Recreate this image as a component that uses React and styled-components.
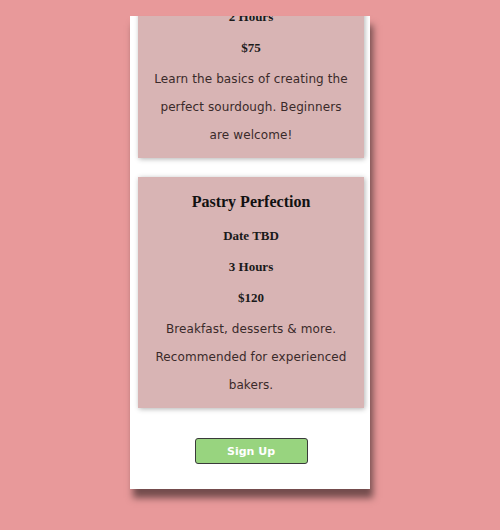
import { useLayoutEffect, useRef } from 'react';
import styled, { createGlobalStyle } from 'styled-components';

const GlobalStyle = createGlobalStyle`
  html, body {
    margin: 0;
    padding: 0;
    background: #e8999a;
    font-family: "DejaVu Sans", "Open Sans", sans-serif;
  }
`;

const Page = styled.div`
  width: 500px;
  height: 530px;
  padding-top: 16px;
  box-sizing: border-box;
  display: flex;
  justify-content: center;
  align-items: flex-start;
`;

const Panel = styled.div`
  width: 240px;
  height: 473px;
  background: #fff;
  box-shadow: 3px 9px 7px rgba(0, 0, 0, 0.5);
  overflow-y: auto;
  scrollbar-width: none;
  &::-webkit-scrollbar {
    display: none;
  }
`;

const Inner = styled.div`
  padding: 8px 6px 25px 8px;
  display: flex;
  flex-direction: column;
  align-items: center;
`;

const Heading = styled.h2`
  font-family: "Liberation Serif", serif;
  font-size: 22px;
  margin: 12px 0 20px;
  color: #222;
`;

const Card = styled.div`
  width: 226px;
  box-sizing: border-box;
  background: #d8b4b4;
  box-shadow: 1px 1px 5px rgba(0, 0, 0, 0.3);
  padding: 14px 13px 9px;
  margin-bottom: ${(p) => (p.$last ? '30px' : '19px')};
  text-align: center;
`;

const Title = styled.h3`
  font-family: "Liberation Serif", serif;
  font-size: 16px;
  line-height: 22px;
  margin: 0 0 7px;
  color: #111;
`;

const Detail = styled.h4`
  font-family: "Liberation Serif", serif;
  font-size: 13px;
  line-height: 31px;
  margin: 0;
  color: #1a1a1a;
`;

const Desc = styled.p`
  font-size: 12px;
  line-height: 28px;
  margin: 2px 0 0;
  color: #3a2a2a;
  letter-spacing: 0.1px;
`;

const Button = styled.button`
  width: 113px;
  height: 26px;
  background: #98d47f;
  border: 1px solid #3a3a3a;
  border-radius: 3px;
  color: #fff;
  font-family: "DejaVu Sans", sans-serif;
  font-weight: bold;
  font-size: 11px;
  cursor: pointer;
`;

const classes = [
  {
    title: 'Sourdough Basics',
    date: 'Date TBD',
    length: '2 Hours',
    price: '$75',
    desc: 'Learn the basics of creating the perfect sourdough. Beginners are welcome!',
  },
  {
    title: 'Pastry Perfection',
    date: 'Date TBD',
    length: '3 Hours',
    price: '$120',
    desc: 'Breakfast, desserts & more. Recommended for experienced bakers.',
  },
];

const App = () => {
  const panelRef = useRef(null);

  useLayoutEffect(() => {
    const el = panelRef.current;
    if (el) el.scrollTop = el.scrollHeight;
  }, []);

  return (
    <Page>
      <GlobalStyle />
      <Panel ref={panelRef}>
        <Inner>
          <Heading>Baking Classes</Heading>
          {classes.map((c, i) => (
            <Card key={c.title} $last={i === classes.length - 1}>
              <Title>{c.title}</Title>
              <Detail>{c.date}</Detail>
              <Detail>{c.length}</Detail>
              <Detail>{c.price}</Detail>
              <Desc>{c.desc}</Desc>
            </Card>
          ))}
          <Button>Sign Up</Button>
        </Inner>
      </Panel>
    </Page>
  );
};

export default App;
